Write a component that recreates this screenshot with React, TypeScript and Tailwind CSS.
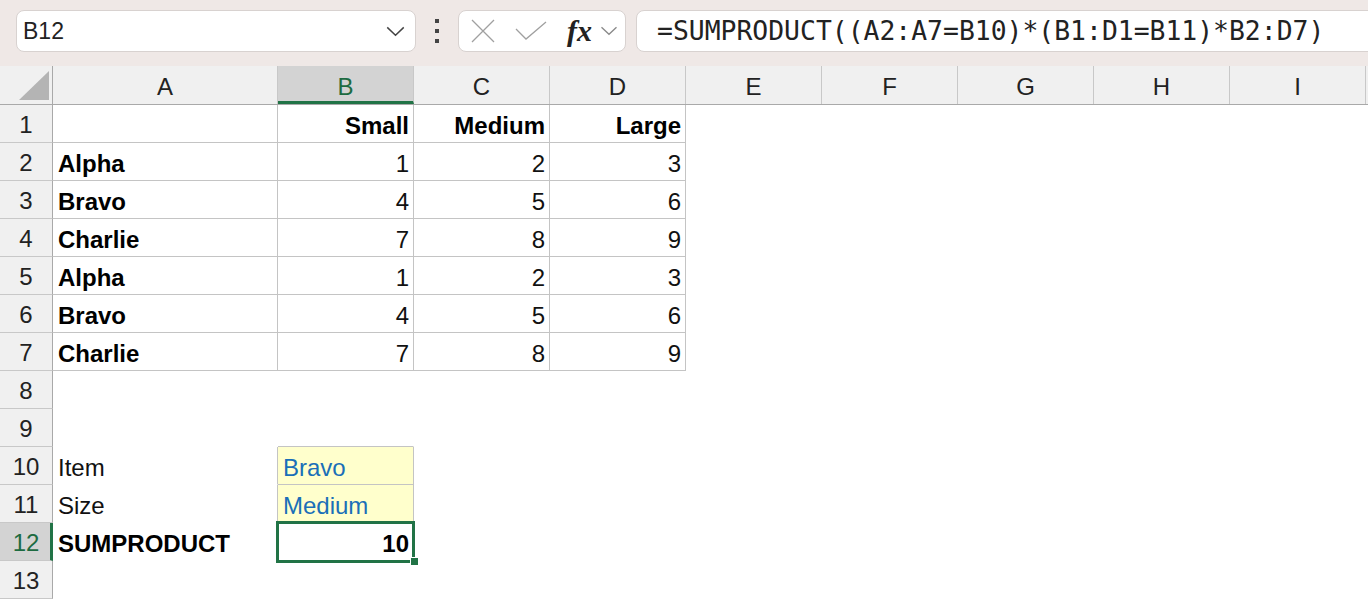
import React from "react";

type Cell = { text?: string; bold?: boolean; align?: "left" | "right"; border?: boolean; right?: boolean; bottom?: boolean; fill?: boolean; blue?: boolean };

const colLetters = ["A", "B", "C", "D", "E", "F", "G", "H", "I"];
const colWidths = ["w-[225px]", "w-[136px]", "w-[136px]", "w-[136px]", "w-[136px]", "w-[136px]", "w-[136px]", "w-[136px]", "w-[136px]"];

const table: Array<[string, number, number, number]> = [
  ["Alpha", 1, 2, 3],
  ["Bravo", 4, 5, 6],
  ["Charlie", 7, 8, 9],
  ["Alpha", 1, 2, 3],
  ["Bravo", 4, 5, 6],
  ["Charlie", 7, 8, 9],
];

function buildRows(): Cell[][] {
  const rows: Cell[][] = [];
  rows.push([
    { border: true },
    { text: "Small", bold: true, align: "right", border: true },
    { text: "Medium", bold: true, align: "right", border: true },
    { text: "Large", bold: true, align: "right", border: true },
  ]);
  table.forEach(([name, a, b, c]) => {
    rows.push([
      { text: name, bold: true, border: true },
      { text: String(a), align: "right", border: true },
      { text: String(b), align: "right", border: true },
      { text: String(c), align: "right", border: true },
    ]);
  });
  rows.push([]);
  rows.push([{}, { bottom: true }]);
  rows.push([{ text: "Item", right: true }, { text: "Bravo", border: true, fill: true, blue: true }]);
  rows.push([{ text: "Size", right: true }, { text: "Medium", border: true, fill: true, blue: true }]);
  rows.push([{ text: "SUMPRODUCT", bold: true }, { text: "10", bold: true, align: "right" }]);
  rows.push([]);
  return rows;
}

function Chevron({ className }: { className: string }) {
  return (
    <svg viewBox="0 0 20 12" className={className} fill="none" stroke="currentColor" strokeWidth="1.6">
      <path d="M1 1.5 L10 10 L19 1.5" />
    </svg>
  );
}

export default function App() {
  const rows = buildRows();
  return (
    <div className="w-[1368px] h-[604px] overflow-hidden bg-white font-['Liberation_Sans',Arial,sans-serif] text-[#111]">
      {/* formula bar */}
      <div className="flex h-[66px] items-start bg-[#efe8e6] pt-[10px]">
        <div className="ml-4 flex h-[42px] w-[400px] shrink-0 items-center justify-between rounded-lg border border-[#d8d2d0] bg-white pl-[6px] pr-[10px]">
          <span className="text-[23px] text-[#222]">B12</span>
          <Chevron className="h-[11px] w-[19px] text-[#444]" />
        </div>
        <div className="flex h-[42px] w-[42px] shrink-0 flex-col items-center justify-center gap-[6px]">
          <span className="h-[4px] w-[4px] bg-[#444]" />
          <span className="h-[4px] w-[4px] bg-[#444]" />
          <span className="h-[4px] w-[4px] bg-[#444]" />
        </div>
        <div className="flex h-[42px] w-[168px] shrink-0 items-center rounded-lg border border-[#d8d2d0] bg-white pl-[12px]">
          <svg viewBox="0 0 24 24" className="h-[24px] w-[24px] text-[#a0a0a0]" fill="none" stroke="currentColor" strokeWidth="1.3">
            <path d="M1 1 L23 23 M23 1 L1 23" />
          </svg>
          <svg viewBox="0 0 32 20" className="ml-[20px] h-[20px] w-[32px] text-[#a0a0a0]" fill="none" stroke="currentColor" strokeWidth="1.3">
            <path d="M1 8 L11 18 L31 1" />
          </svg>
          <span className="ml-[20px] font-['Liberation_Serif',serif] text-[30px] italic font-bold leading-none text-[#222]">fx</span>
          <Chevron className="ml-[8px] h-[10px] w-[18px] text-[#8a8a8a]" />
        </div>
        <div className="ml-[10px] flex h-[42px] w-[780px] shrink-0 items-center rounded-lg border border-[#d8d2d0] bg-white pl-[20px]">
          <span className="font-['DejaVu_Sans_Mono',monospace] text-[26.4px] text-[#222]">=SUMPRODUCT((A2:A7=B10)*(B1:D1=B11)*B2:D7)</span>
        </div>
      </div>

      {/* column headers */}
      <div className="flex h-[39px] border-b border-[#a9a9a9] bg-[#f0f0f0]">
        <div className="relative w-[53px] shrink-0 border-r border-[#a9a9a9]">
          <svg viewBox="0 0 30 29" className="absolute bottom-[4px] right-[3px] h-[29px] w-[30px]">
            <path d="M0 29 L30 29 L30 0 Z" fill="#b4b4b4" />
          </svg>
        </div>
        {colLetters.map((c, i) => (
          <div
            key={c}
            className={`${colWidths[i]} flex shrink-0 items-center justify-center border-r border-[#c8c8c8] text-[24px] ${c === "B" ? "border-b-[3px] border-b-[#217346] bg-[#d3d3d3] pt-[6px] text-[#1d6b41]" : "pt-[4px] text-[#222]"}`}
          >
            {c}
          </div>
        ))}
      </div>

      {/* rows */}
      {rows.map((row, r) => {
        const selRow = r === 11;
        return (
          <div key={r} className="flex h-[38px]">
            <div
              className={`flex w-[53px] shrink-0 items-center justify-center border-b border-b-[#c8c8c8] pt-[3px] text-[24px] ${selRow ? "border-r-[3px] border-r-[#217346] bg-[#d3d3d3] pl-[2px] text-[#1d6b41]" : "border-r border-r-[#a9a9a9] bg-[#f0f0f0] text-[#222]"}`}
            >
              {r + 1}
            </div>
            {colLetters.map((c, i) => {
              const cell = row[i] ?? {};
              const sel = selRow && i === 1;
              return (
                <div
                  key={c}
                  className={`relative flex shrink-0 items-center border-r border-b pt-[4px] text-[24px] ${colWidths[i]} ${cell.border || cell.right ? "border-r-[#c4c4c4]" : "border-r-transparent"} ${cell.border || cell.bottom ? "border-b-[#c4c4c4]" : "border-b-transparent"} ${cell.align === "right" ? "justify-end pr-[4px]" : "pl-[5px]"} ${cell.bold ? "font-bold text-black" : ""} ${cell.fill ? "bg-[#ffffcc]" : ""} ${cell.blue ? "text-[#1a6fb8]" : ""}`}
                >
                  {cell.text}
                  {sel && (
                    <>
                      <div className="absolute -left-[2px] -top-[2px] -right-[2px] -bottom-[3px] border-[3px] border-[#217346]" />
                      <div className="absolute -bottom-[6px] -right-[6px] h-[9px] w-[9px] border border-white bg-[#217346]" />
                    </>
                  )}
                </div>
              );
            })}
          </div>
        );
      })}
    </div>
  );
}
